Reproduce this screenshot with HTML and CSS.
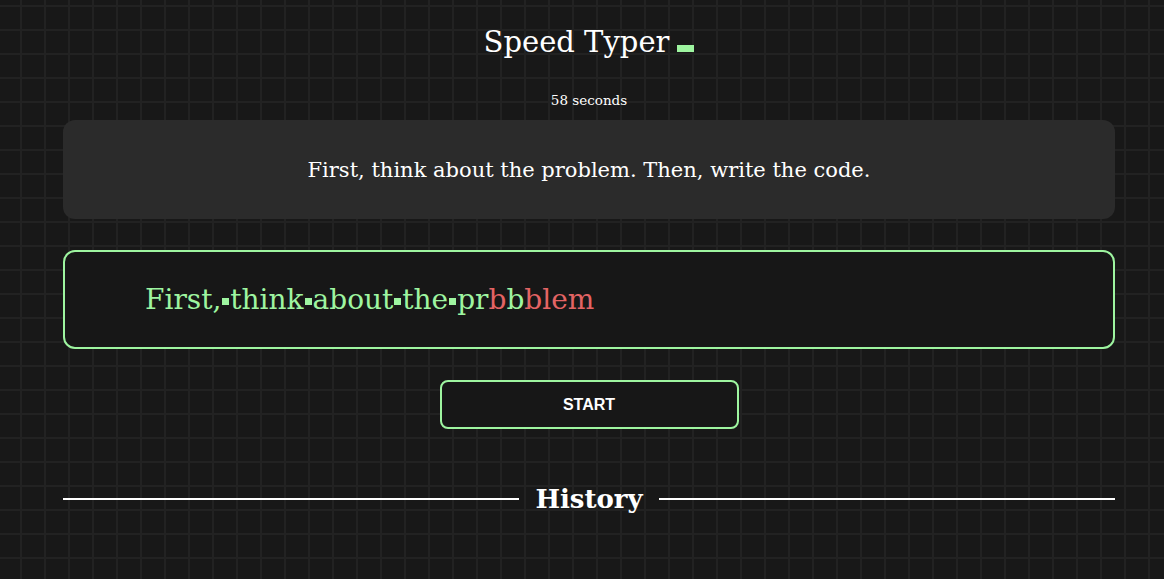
FILE: index.html
```html
<!DOCTYPE html>
<html>
<head>
<meta charset="utf-8">
<link rel="stylesheet" href="styles.css">
</head>
<body>
<main class="app">
  <h1 class="title">Speed Typer<span class="cursor"></span></h1>
  <p class="timer">58 seconds</p>
  <div class="quote">First, think about the problem. Then, write the code.</div>
  <div class="typed">
    <span class="ok">First,</span><span class="sp"></span><span class="ok">think</span><span class="sp"></span><span class="ok">about</span><span class="sp"></span><span class="ok">the</span><span class="sp"></span><span class="ok">pr</span><span class="bad">b</span><span class="ok">b</span><span class="bad">blem</span>
  </div>
  <div class="actions"><button class="start">START</button></div>
  <div class="history"><span class="rule"></span><h2>History</h2><span class="rule"></span></div>
</main>
</body>
</html>
```

FILE: styles.css
```css
html, body {
  margin: 0;
  padding: 0;
  height: 100%;
}
body {
  background-color: #181818;
  background-image:
    linear-gradient(to right, #222 2px, transparent 2px),
    linear-gradient(to bottom, #222 2px, transparent 2px);
  background-size: 24px 24px;
  background-position: 20px 5px;
  color: #fff;
  font-family: "DejaVu Serif", serif;
}
.app {
  padding: 0 49px 0 63px;
  display: flex;
  flex-direction: column;
}
.title {
  margin: 22px 0 0;
  font-size: 29px;
  font-weight: normal;
  text-align: center;
  line-height: 40px;
}
.cursor {
  display: inline-block;
  width: 17px;
  height: 7px;
  background: #9ef5a0;
  margin-left: 8px;
}
.timer {
  margin: 30px 0 0;
  text-align: center;
  font-size: 13.5px;
  line-height: 17px;
}
.quote {
  margin-top: 11px;
  height: 99px;
  background: #2b2b2b;
  border-radius: 12px;
  display: flex;
  align-items: center;
  justify-content: center;
  font-size: 21px;
}
.typed {
  margin-top: 31px;
  height: 95px;
  border: 2px solid #9ef5a0;
  border-radius: 12px;
  background: #171717;
  display: flex;
  align-items: center;
  padding-left: 80px;
  font-size: 28px;
}
.ok { color: #9ef5a0; }
.bad { color: #e36464; }
.sp {
  display: inline-block;
  width: 7px;
  height: 7px;
  background: #9ef5a0;
  margin: 4px 1px 0;
}
.actions {
  display: flex;
  justify-content: center;
  margin-top: 31px;
}
.start {
  width: 299px;
  height: 49px;
  background: #171717;
  border: 2px solid #9ef5a0;
  border-radius: 8px;
  color: #fff;
  font-family: "Liberation Sans", Arial, sans-serif;
  font-weight: bold;
  font-size: 16px;
}
.history {
  margin-top: 52px;
  display: flex;
  align-items: center;
  gap: 16px;
}
.rule {
  flex: 1;
  height: 2px;
  background: #fff;
}
.history h2 {
  margin: 0;
  font-size: 26px;
  font-weight: bold;
  line-height: 36px;
}
```
